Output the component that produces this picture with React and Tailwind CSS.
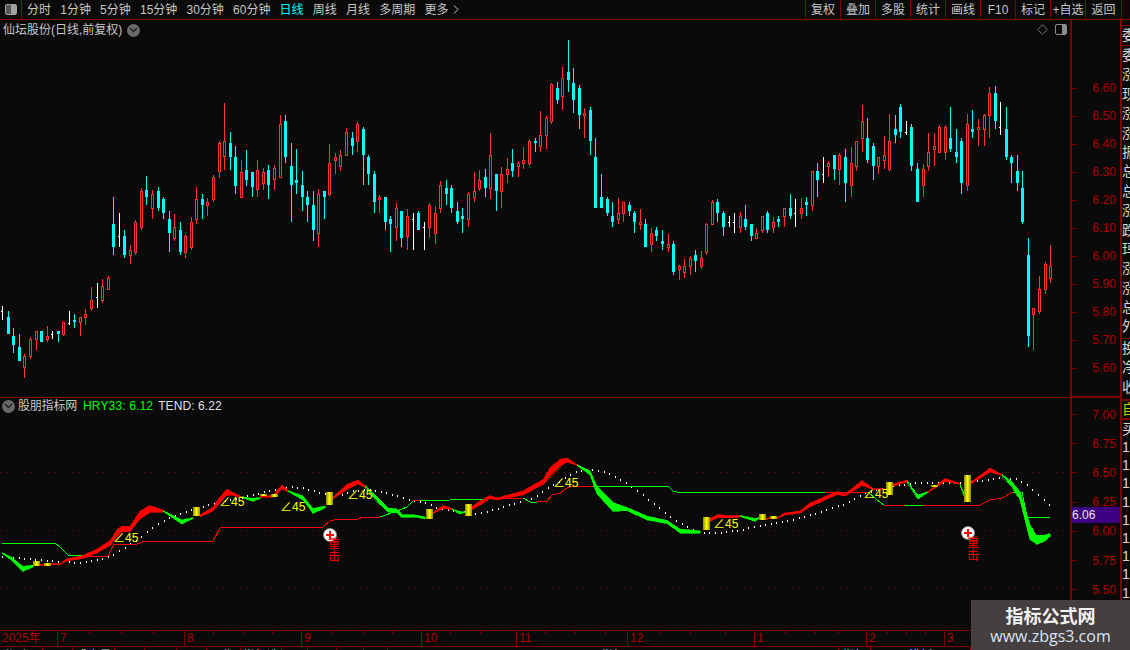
const periods = ["分时", "1分钟", "5分钟", "15分钟", "30分钟", "60分钟", "日线", "周线", "月线", "多周期"];
const actions = ["复权", "叠加", "多股", "统计", "画线", "F10", "标记", "+自选"];

// [x, type, wickTop, bodyTop, bodyBottom, wickBottom] in page pixels
// c = cyan filled, r = red hollow, w = white doji (bodyTop is the tick)
const candles = [
  [2,"w",306,311,311,320],[8,"c",311,317,334,334],[13,"c",328,336,345,353],[19,"c",334,347,361,361],[24,"r",354,356,368,378],
  [30,"r",337,339,357,359],[36,"r",331,331,340,350],[41,"c",331,331,342,342],[47,"r",326,336,340,342],[52,"w",331,334,334,339],
  [58,"c",331,331,334,342],[63,"r",322,322,335,336],[69,"w",311,323,323,325],[74,"c",314,320,322,328],[80,"r",317,317,323,336],
  [85,"r",309,314,318,325],[91,"r",287,300,309,311],[97,"w",283,297,297,308],[102,"r",279,286,301,303],[108,"r",276,278,290,290],
  [113,"c",197,224,247,255],[119,"w",213,236,236,247],[124,"c",230,236,255,258],[130,"r",245,250,256,264],[135,"r",220,222,253,255],
  [141,"r",188,191,228,230],[146,"c",176,190,197,205],[152,"r",190,194,209,219],[158,"c",187,191,208,211],[163,"c",197,199,213,219],
  [169,"c",211,219,233,252],[174,"r",214,227,239,241],[180,"c",222,230,252,255],[185,"r",234,236,253,258],[191,"r",217,222,248,250],
  [196,"r",187,199,220,224],[202,"c",194,199,205,219],[207,"r",198,202,206,216],[213,"r",175,177,200,202],[219,"r",141,143,172,178],
  [224,"r",103,141,157,170],[230,"c",132,143,157,170],[235,"c",146,157,186,194],[241,"r",160,172,198,198],[246,"c",150,170,180,186],
  [252,"c",172,172,187,197],[257,"r",160,170,190,197],[263,"r",168,172,184,190],[268,"c",165,170,185,199],[274,"r",165,168,180,190],
  [280,"r",115,124,178,178],[285,"c",115,121,157,163],[291,"c",143,166,185,222],[296,"c",149,180,183,194],[302,"c",171,185,197,211],
  [307,"c",191,197,205,222],[313,"c",191,205,230,241],[318,"r",189,194,234,247],[324,"c",191,191,197,219],[329,"r",144,163,195,196],
  [335,"r",153,157,161,174],[340,"r",150,155,167,171],[346,"r",128,132,156,156],[352,"c",132,138,146,155],[357,"r",122,124,142,152],
  [363,"c",127,129,155,185],[368,"c",155,157,174,185],[374,"c",171,174,202,213],[379,"r",195,197,200,213],[385,"c",197,197,222,230],
  [390,"c",216,219,224,252],[396,"r",203,208,228,241],[401,"c",211,211,238,247],[407,"r",209,216,237,250],[413,"w",213,219,219,250],
  [418,"c",211,213,230,230],[424,"w",222,227,227,250],[429,"r",203,205,228,238],[435,"r",206,213,234,244],[440,"r",181,185,209,213],
  [446,"c",180,188,194,205],[451,"c",185,188,208,213],[457,"c",202,211,222,224],[462,"c",208,216,219,233],[468,"r",192,194,220,227],
  [474,"r",172,191,198,202],[479,"r",170,180,189,191],[485,"c",169,177,188,197],[490,"r",133,155,189,199],[496,"c",174,174,191,211],
  [501,"r",167,174,192,208],[507,"r",158,169,175,183],[512,"c",149,163,171,177],[518,"r",161,163,167,177],[523,"r",147,160,164,169],
  [529,"r",139,141,164,166],[535,"c",138,141,143,152],[540,"r",111,135,147,152],[546,"r",116,118,136,149],[551,"r",83,84,122,124],
  [557,"c",82,88,100,104],[562,"r",67,78,97,110],[568,"c",40,72,80,92],[573,"c",68,83,100,113],[579,"c",85,88,115,129],
  [584,"r",108,113,116,138],[590,"c",107,110,141,155],[595,"c",138,157,208,208],[601,"c",174,197,208,208],[607,"c",197,199,213,216],
  [612,"c",202,216,222,227],[618,"r",198,213,220,224],[623,"r",202,202,214,222],[629,"c",202,205,211,216],[634,"c",211,213,222,233],
  [640,"r",209,222,225,230],[645,"c",219,224,247,247],[651,"r",228,233,245,252],[656,"c",227,230,236,241],[662,"c",230,241,244,250],
  [668,"r",234,244,248,252],[673,"c",241,244,272,275],[679,"r",265,266,270,280],[684,"r",259,266,273,278],[690,"r",256,258,267,275],
  [695,"c",250,255,261,272],[701,"r",251,258,267,269],[706,"r",223,224,253,255],[712,"r",200,202,225,225],[717,"c",199,202,213,222],
  [723,"c",211,213,227,236],[729,"w",216,222,222,227],[734,"w",213,222,222,233],[740,"r",212,216,228,233],[745,"c",205,219,227,230],
  [751,"c",224,224,236,241],[756,"r",228,233,239,239],[762,"r",216,216,231,233],[767,"c",211,213,230,233],[773,"r",217,222,228,233],
  [778,"c",216,219,222,227],[784,"r",208,208,217,227],[790,"c",194,208,216,219],[795,"w",199,213,213,227],[801,"r",198,208,214,219],
  [806,"c",197,202,205,216],[812,"r",171,171,206,211],[817,"c",163,171,180,197],[823,"w",157,174,174,183],[828,"r",161,163,167,177],
  [834,"c",155,155,169,180],[839,"r",153,155,170,185],[845,"c",149,157,183,202],[851,"r",147,163,186,197],[856,"r",141,141,167,171],
  [862,"r",105,121,139,152],[867,"c",118,138,160,163],[873,"c",143,146,166,180],[878,"r",157,157,167,174],[884,"r",136,155,161,169],
  [889,"r",114,141,170,171],[895,"c",115,129,135,143],[900,"c",104,107,132,138],[906,"w",121,132,132,135],[911,"c",124,127,166,171],
  [917,"c",163,169,202,202],[923,"r",164,169,186,197],[928,"r",133,152,167,171],[934,"r",133,146,150,166],[939,"r",125,127,153,153],
  [945,"r",125,127,153,160],[950,"c",107,138,149,152],[956,"c",129,152,157,163],[961,"c",138,141,183,194],[967,"r",114,124,186,191],
  [972,"c",110,129,132,138],[978,"r",119,127,130,146],[984,"r",114,115,130,146],[989,"r",87,93,116,138],[995,"c",86,93,121,129],
  [1000,"w",102,127,127,135],[1006,"c",107,129,157,160],[1011,"c",155,157,163,183],[1017,"c",155,171,183,191],[1022,"c",171,188,222,224],
  [1028,"c",238,255,336,347],[1033,"r",308,308,315,350],[1039,"r",276,289,312,314],[1045,"r",262,264,290,294],[1050,"r",245,266,279,283],
];

const dotLine = [
  [2,556],[7,556],[60,561],[80,562],[102,558],[113,554],[124,547],[140,537],[152,527],[163,520],[180,513],[193,509],[213,503],
  [240,497],[257,493],[277,488],[290,486],[302,487],[325,493],[340,495],[353,490],[367,489],[378,490],[390,493],[413,500],[428,503],
  [438,508],[450,509],[473,513],[485,511],[500,507],[517,502],[533,497],[545,489],[557,482],[573,472],[590,468],[607,472],[623,480],
  [650,500],[673,518],[690,528],[700,532],[717,532],[735,530],[767,524],[805,516],[845,503],[863,493],[893,485],[917,482],[957,482],
  [983,480],[1000,477],[1015,478],[1028,485],[1038,494],[1050,505],
];
const dots = [];
for (let x = 2, i = 0; x < 1050; x += 5.57) {
  while (dotLine[i + 1][0] < x) i++;
  const [x0, y0] = dotLine[i];
  const [x1, y1] = dotLine[i + 1];
  dots.push([Math.round(x), Math.round(y0 + ((y1 - y0) * (x - x0)) / (x1 - x0))]);
}

// thin step lines
const thin = [
  ["#00ff00", "2,543 55,543 60,547 68,555 87,555"],
  ["#ff0000", "83,556 108,556 114,544 137,544 145,541 213,541 220,528 225,527 323,527 330,521 338,519 358,519 363,517 380,517"],
  ["#00ff00", "380,517 397,511 407,507 413,501 487,499 523,498 530,502 537,502"],
  ["#ff0000", "413,500 420,500"],
  ["#ff0000", "487,499 523,498"],
  ["#ff0000", "537,501 547,501 552,495 560,493 567,488 573,486 593,486"],
  ["#00ff00", "593,486 668,486 673,491 677,492 825,492"],
  ["#ff0000", "825,492 868,492"],
  ["#00ff00", "868,492 877,500 884,505 912,505"],
  ["#ff0000", "884,505 905,505"],
  ["#00ff00", "912,505 923,505"],
  ["#ff0000", "923,505 980,505 990,500 1002,498 1013,492"],
  ["#00ff00", "1013,492 1022,492 1027,517 1050,517"],
];

// thick ribbon pieces: [x, y, thickness]
const R = "#ff0000";
const G = "#00ff00";
const ribbon = [
  [G, [[2,553,1],[12,559,3],[23,569,5],[33,566,2]]],
  [R, [[40,565,1],[60,564,1],[67,560,2],[83,557,3],[97,551,4],[110,543,5],[117,533,7],[122,529,6],[130,529,5],[140,515,8],[150,509,7],[163,511,2]]],
  [G, [[163,511,1],[175,518,3],[182,522,4],[193,518,1]]],
  [R, [[200,516,2],[213,509,4],[220,500,6],[227,492,6],[233,494,3],[241,497,1]]],
  [G, [[241,497,1],[253,500,3],[260,498,1]]],
  [R, [[260,497,1],[273,496,2],[282,487,4],[288,491,2]]],
  [G, [[288,491,1],[303,498,4],[313,511,5],[325,507,2]]],
  [R, [[333,498,2],[347,487,5],[358,482,4],[367,488,1]]],
  [G, [[365,486,1],[380,502,5],[388,510,4],[397,511,4],[402,516,3],[415,516,2],[425,518,2]]],
  [R, [[433,513,1],[443,507,3],[452,509,1]]],
  [G, [[452,509,1],[460,513,2],[465,512,1]]],
  [R, [[472,508,3],[480,503,4],[490,497,3],[497,499,2],[523,493,4],[543,482,5],[550,472,9],[560,463,7],[567,460,4],[577,465,1]]],
  [G, [[577,465,1],[590,473,4],[597,490,8],[613,507,9],[627,509,3],[647,518,4],[667,522,3],[680,531,4],[700,532,2]]],
  [R, [[710,520,3],[718,516,3],[730,517,2],[740,516,2]]],
  [G, [[740,516,1],[755,520,3],[759,518,1]]],
  [R, [[766,519,1],[770,518,1]]],
  [R, [[777,518,1],[785,514,2],[800,512,2],[810,505,4],[837,493,3],[845,495,2],[862,483,5],[873,489,1],[885,489,1]]],
  [R, [[893,485,2],[907,481,2]]],
  [G, [[907,481,1],[918,497,4],[928,492,1]]],
  [R, [[928,492,1],[945,480,3],[960,484,1]]],
  [G, [[960,484,1],[964,494,3]]],
  [R, [[971,483,2],[990,470,4],[1002,475,1]]],
  [G, [[1002,475,1],[1012,484,5],[1020,496,8],[1025,514,12],[1030,532,15],[1037,540,9],[1045,538,6],[1050,535,3]]],
];
const ribbonPoints = (pts) =>
  [...pts.map(([x, y, t]) => `${x},${y - t / 2}`), ...[...pts].reverse().map(([x, y, t]) => `${x},${y + t / 2}`)].join(" ");

// yellow bars: [x, y, w, h]
const bars = [
  [33,561,7,5],[44,563,7,3],[193,507,7,9],[260,494,7,2],[271,494,7,3],[326,492,7,13],[426,509,7,10],[465,504,7,12],
  [703,517,7,13],[759,514,7,6],[770,516,7,3],[886,482,7,13],[931,485,7,2],[964,475,7,27],
];
const angleLabels = [[113,542],[219,506],[280,511],[347,499],[553,487],[713,528],[863,498]];

const mainAxis = ["6.60", "6.50", "6.40", "6.30", "6.20", "6.10", "6.00", "5.90", "5.80", "5.70", "5.60"];
const subAxis = ["7.00", "6.75", "6.50", "6.25", "6.00", "5.75", "5.50"];
const months = [
  ["2025年", "w-[57px] pl-[2px]"],["7", "w-[127px] pl-[2px]"],["8", "w-[117px] pl-[2px]"],["9", "w-[120px] pl-[2px]"],["10", "w-[95px] pl-[2px]"],
  ["11", "w-[111px] pl-[2px]"],["12", "w-[127px] pl-[2px]"],["1", "w-[112px] pl-[2px]"],["2", "w-[78px] pl-[2px]"],["3", "w-[186px] pl-[2px]"],
];
const dateTicks = [89,121,153,213,243,272,332,363,392,450,480,545,575,605,660,690,725,785,815,838,887,906,925];
const tabs = [
  ["分时图", "w-[43px]"],["MACD", "w-[30px]"],["成交量", "w-[42px]"],["KDJ", "w-[30px]"],["BOLL", "w-[32px]"],["RSI", "w-[30px]"],["周期", "w-[34px]"],
  ["指标选股", "w-[41px]"],["DMI", "w-[26px]"],["WR", "w-[29px]"],["CCI", "w-[27px]"],["OBV", "w-[24px]"],["指标", "w-[451px]"],["指标", "w-[32px] text-[#00ffff]"],["模板", "w-[100px]"],
];
const sideTop = ["委", "委", "涨", "现", "涨", "涨", "振", "总", "总", "涨", "跌", "玛", "涨", "涨", "总", "外"];
const sideBottom = ["换", "净", "收"];
const sideValues = ["买", "1", "1", "1", "1", "1", "1", "1", "1", "1", "1", "1"];

function Candle({ c }) {
  const [x, type, wt, bt, bb, wb] = c;
  if (type === "w") {
    return (
      <g fill="#ffffff">
        <rect x={x} y={wt} width="1" height={wb - wt} />
        <rect x={x - 1} y={bt} width="1" height="1" />
      </g>
    );
  }
  if (type === "c") {
    return (
      <g fill="#00ffff">
        <rect x={x} y={wt} width="1" height={wb - wt} />
        <rect x={x - 1} y={bt} width="3" height={Math.max(bb - bt, 1)} />
      </g>
    );
  }
  return (
    <g>
      <rect x={x} y={wt} width="1" height={bt - wt} fill="#ff3232" />
      <rect x={x} y={bb} width="1" height={wb - bb} fill="#ff3232" />
      <rect x={x - 0.5} y={bt + 0.5} width="2" height={Math.max(bb - bt - 1, 1)} fill="#0a0a0a" stroke="#ff3232" />
    </g>
  );
}

function Chevron({ className }) {
  return (
    <div className={`flex items-center justify-center w-[13px] h-[13px] rounded-full bg-[#6a6a6a] ${className}`}>
      <svg width="9" height="6" viewBox="0 0 9 6" fill="none" stroke="#1c1c1c" strokeWidth="1.4">
        <path d="M1 1l3.5 3.5L8 1" />
      </svg>
    </div>
  );
}

function PaneIcon({ className }) {
  return (
    <div className={`w-[12px] h-[11px] rounded-[2px] border-[1.5px] border-[#8c8c8c] flex justify-end ${className}`}>
      <div className="w-[4px] h-full bg-[#8c8c8c]" />
    </div>
  );
}

function Marker({ x, y, tx, ty }) {
  return (
    <g>
      <circle cx={x} cy={y} r="6.5" fill="#ffffff" stroke="#8a8a8a" strokeWidth="0.8" />
      <rect x={x - 4} y={y - 1} width="8" height="2" fill="#ff0000" />
      <rect x={x - 1} y={y - 4} width="2" height="8" fill="#ff0000" />
      <text x={tx} y={ty} fill="#ff0000" fontSize="12">重</text>
      <text x={tx} y={ty + 13} fill="#ff0000" fontSize="12">击</text>
    </g>
  );
}

export default function App() {
  return (
    <div className="relative w-[1130px] h-[650px] overflow-hidden flex flex-col bg-[#0a0a0a] text-[12px] text-[#c8c8c8] font-['Liberation_Sans','Noto_Sans_CJK_SC',sans-serif]">
      {/* top toolbar */}
      <div className="flex h-[20px] shrink-0 border-b border-[#800000]">
        <div className="w-[22px] flex items-center justify-center border-r border-[#800000]">
          <div className="w-[12px] h-[11px] rounded-[2px] border border-[#a0a0a0] bg-[#555555] flex justify-end">
            <div className="w-[5px] h-full bg-[#a0a0a0]" />
          </div>
        </div>
        <div className="flex items-center gap-[9.2px] pl-[5px] flex-1">
          {periods.map((p) => (
            <span key={p} className={p === "日线" ? "text-[#00ffff]" : ""}>{p}</span>
          ))}
          <span>更多</span>
          <svg className="-ml-[5px]" width="6" height="9" viewBox="0 0 6 9" fill="none" stroke="#c8c8c8">
            <path d="M1 .5l4 4-4 4" />
          </svg>
        </div>
        {actions.map((a) => (
          <div key={a} className="w-[35px] shrink-0 flex items-center justify-center border-l border-[#800000]">{a}</div>
        ))}
        <div className="w-[37px] shrink-0 flex items-center justify-center border-x border-[#800000]">返回</div>
        <div className="w-[8px] shrink-0" />
      </div>

      <div className="flex h-[610px] shrink-0">
        <div className="w-[1070px] shrink-0 flex flex-col">
          {/* candlestick pane */}
          <div className="relative h-[378px] shrink-0 border-b border-[#800000]">
            <svg width="1070" height="377" viewBox="0 20 1070 377" shapeRendering="crispEdges" className="block">
              {[88, 144, 200, 256, 312, 368].map((y) => (
                <line key={y} x1="0" x2="1067" y1={y + 0.5} y2={y + 0.5} stroke="#3a0e0e" strokeDasharray="1 5" />
              ))}
              {candles.map((c) => (
                <Candle key={c[0]} c={c} />
              ))}
            </svg>
            <div className="absolute left-[3px] top-[2px] flex items-center">
              <span className="leading-[16px]">仙坛股份(日线,前复权)</span>
              <Chevron className="ml-[5px]" />
            </div>
            <svg className="absolute left-[1037px] top-[4px]" width="11" height="11" viewBox="0 0 11 11" fill="none" stroke="#707070">
              <path d="M5.5.7l4.8 4.8-4.8 4.8L.7 5.5z" />
            </svg>
            <PaneIcon className="absolute left-[1055px] top-[4px]" />
          </div>

          {/* indicator pane */}
          <div className="relative flex-1">
            <svg width="1070" height="232" viewBox="0 398 1070 232" className="block" fontFamily="'Liberation Sans','Noto Sans CJK SC',sans-serif">
              <defs>
                <linearGradient id="bar">
                  <stop offset="0" stopColor="#8a8a00" />
                  <stop offset="0.5" stopColor="#ffff00" />
                  <stop offset="1" stopColor="#8a8a00" />
                </linearGradient>
              </defs>
              <g shapeRendering="crispEdges">
                {[472, 530, 588].map((y) => (
                  <line key={y} x1="0" x2="1067" y1={y + 0.5} y2={y + 0.5} stroke="#661010" strokeDasharray="1 5" />
                ))}
                {dots.map(([x, y]) => (
                  <rect key={x} x={x} y={y} width="1" height="2" fill="#ffffff" />
                ))}
                {thin.map(([color, points], i) => (
                  <polyline key={i} points={points} fill="none" stroke={color} />
                ))}
                {ribbon.map(([color, pts], i) => (
                  <polygon key={i} points={ribbonPoints(pts)} fill={color} stroke={color} strokeWidth="0.6" />
                ))}
                {bars.map(([x, y, w, h]) => (
                  <rect key={x} x={x} y={y} width={w} height={h} fill="url(#bar)" />
                ))}
              </g>
              {angleLabels.map(([x, y]) => (
                <text key={x} x={x} y={y} fill="#ffff00" fontSize="12">∠45</text>
              ))}
              <Marker x={330} y={535} tx={328} ty={548} />
              <Marker x={968} y={533} tx={967} ty={547} />
            </svg>
            <div className="absolute left-[2px] top-0 flex items-center h-[16px]">
              <Chevron />
              <span className="ml-[3px] tracking-[-0.2px]">股朋指标网</span>
              <span className="ml-[6px] text-[#00ff00] tracking-[0.15px]">HRY33: 6.12</span>
              <span className="ml-[5px] text-[#e0e0e0] tracking-[0.1px]">TEND: 6.22</span>
            </div>
          </div>
        </div>

        {/* price axis */}
        <div className="relative w-[52px] shrink-0 flex flex-col border-x-2 border-[#800000] text-[#b00000]">
          <div className="h-[378px] shrink-0 pt-[54px] border-b-2 border-[#800000]">
            {mainAxis.map((v) => (
              <div key={v} className="h-[28px] flex items-center justify-between pr-[4px]">
                <div className="w-[5px] h-px bg-[#800000]" />
                <span className="tracking-[0.1px]">{v}</span>
              </div>
            ))}
          </div>
          <div className="flex-1 pt-[2px]">
            {subAxis.map((v) => (
              <div key={v} className="h-[29.2px] flex items-center justify-between pr-[4px]">
                <div className="w-[5px] h-px bg-[#800000]" />
                <span className="tracking-[0.1px]">{v}</span>
              </div>
            ))}
          </div>
          <div className="absolute left-0 right-0 top-[487px] h-[16px] flex items-center bg-[#3c0080] text-[#e8e8e8]">6.06</div>
        </div>

        {/* clipped side list */}
        <div className="w-[8px] overflow-hidden text-[14px] text-[#d8d8d8]">
          <div className="w-[14px]">
            <div className="border-y border-[#800000] h-[21px] mt-[5px] leading-[19px]">{sideTop[0]}</div>
            {sideTop.slice(1).map((c, i) => (
              <div key={i} className="h-[19.4px] leading-[19px]">{c}</div>
            ))}
            <div className="border-t border-[#800000] h-[61px] mt-px">
              {sideBottom.map((c) => (
                <div key={c} className="h-[19.5px] leading-[19px]">{c}</div>
              ))}
            </div>
            <div className="border-y-2 border-[#800000] h-[21px] leading-[17px] text-[#cccc00]">自</div>
            {sideValues.map((c, i) => (
              <div key={i} className="h-[18.2px] leading-[18px]">{c}</div>
            ))}
          </div>
        </div>
      </div>

      {/* date axis */}
      <div className="relative flex h-[17px] shrink-0 border-y border-[#800000] text-[#b00000] leading-[15px]">
        {months.map(([label, cls], i) => (
          <div key={label} className={`${cls} ${i > 0 ? "border-l border-[#800000]" : ""}`}>{label}</div>
        ))}
        <svg className="absolute left-0 top-0" width="1070" height="4" shapeRendering="crispEdges">
          {dateTicks.map((x) => (
            <rect key={x} x={x} y="0" width="1" height="3" fill="#800000" />
          ))}
        </svg>
      </div>

      {/* tabs, cut off by the window edge */}
      <div className="flex h-[3px] shrink-0 overflow-hidden leading-[19px] text-[#d8d8d8]">
        {tabs.map(([label, cls], i) => (
          <div key={i} className={`${cls} shrink-0 h-[3px] text-center border-r border-[#800000]`}>{label}</div>
        ))}
      </div>

      {/* watermark */}
      <div className="absolute right-0 bottom-0 w-[159px] h-[50px] flex flex-col items-center bg-[#463f3f]">
        <div className="mt-[2px] text-[18px] leading-[26px] font-bold text-[#f2f2f2] font-['Noto_Sans_CJK_SC',sans-serif]">指标公式网</div>
        <div className="text-[16px] leading-[16px] text-[#d6e4f5] font-['Open_Sans',sans-serif]">www.zbgs3.com</div>
      </div>
    </div>
  );
}
